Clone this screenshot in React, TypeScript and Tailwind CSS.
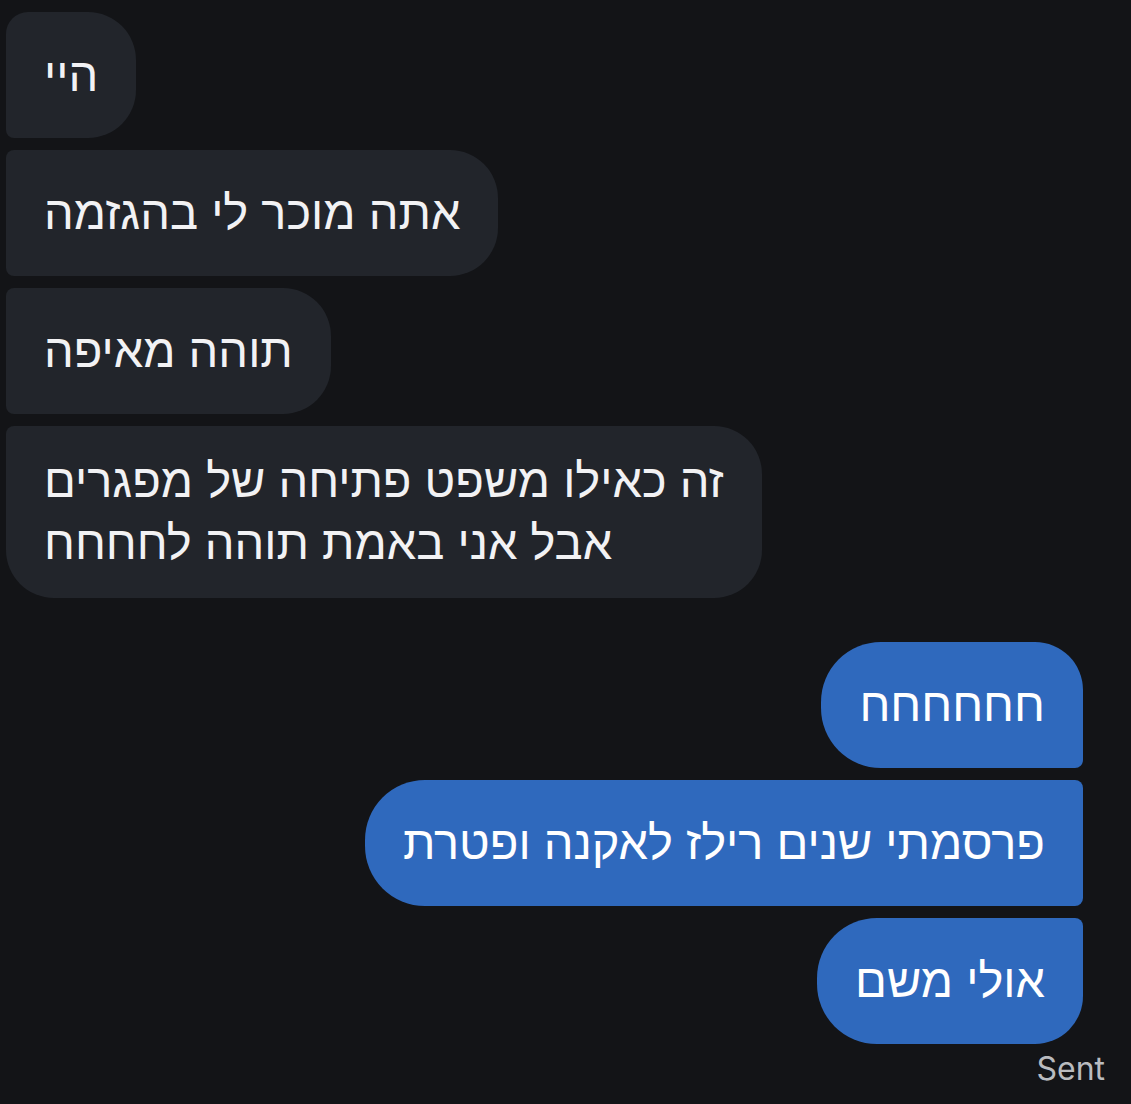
import React from "react";

const heb = { fontFamily: '"Liberation Sans", "DejaVu Sans", sans-serif' };

export default function App() {
  return (
    <div className="min-h-[1104px] w-[1131px] bg-[#131417] pt-[12px] pl-[6px] pr-[48px] flex flex-col">
      <div className="flex flex-col items-start gap-[12px]" dir="rtl" style={heb}>
        <div className="self-end h-[126px] flex items-center px-[38px] bg-[#22252b] text-[#f2f2f4] text-[47px] leading-[62px] whitespace-nowrap rounded-tl-[22px] rounded-bl-[8px] rounded-tr-[48px] rounded-br-[48px]">
          היי
        </div>
        <div className="self-end h-[126px] flex items-center px-[38px] bg-[#22252b] text-[#f2f2f4] text-[47px] leading-[62px] whitespace-nowrap rounded-tl-[8px] rounded-bl-[8px] rounded-tr-[48px] rounded-br-[48px]">
          אתה מוכר לי בהגזמה
        </div>
        <div className="self-end h-[126px] flex items-center px-[38px] bg-[#22252b] text-[#f2f2f4] text-[47px] leading-[62px] whitespace-nowrap rounded-tl-[8px] rounded-bl-[8px] rounded-tr-[48px] rounded-br-[48px]">
          תוהה מאיפה
        </div>
        <div className="self-end py-[24px] px-[38px] bg-[#22252b] text-[#f2f2f4] text-[47px] leading-[62px] whitespace-nowrap text-left rounded-tl-[8px] rounded-bl-[48px] rounded-tr-[48px] rounded-br-[48px]">
          זה כאילו משפט פתיחה של מפגרים
          <br />
          אבל אני באמת תוהה לחחחח
        </div>
      </div>
      <div className="mt-[44px] flex flex-col items-end gap-[12px]" dir="rtl" style={heb}>
        <div className="self-start h-[126px] flex items-center px-[38px] bg-[#2f69bd] text-white text-[47px] leading-[62px] whitespace-nowrap rounded-tr-[48px] rounded-br-[8px] rounded-tl-[60px] rounded-bl-[60px]">
          חחחחחח
        </div>
        <div className="self-start h-[126px] flex items-center px-[38px] bg-[#2f69bd] text-white text-[47px] leading-[62px] whitespace-nowrap rounded-tr-[8px] rounded-br-[8px] rounded-tl-[60px] rounded-bl-[60px]">
          פרסמתי שנים רילז לאקנה ופטרת
        </div>
        <div className="self-start h-[126px] flex items-center px-[38px] bg-[#2f69bd] text-white text-[47px] leading-[62px] whitespace-nowrap rounded-tr-[8px] rounded-br-[48px] rounded-tl-[60px] rounded-bl-[60px]">
          אולי משם
        </div>
      </div>
      <div className="flex justify-end mr-[-22px] mt-[3px]">
        <span className="text-[#b9bbbf] text-[32px] leading-[44px]" style={{ fontFamily: "Inter, sans-serif" }}>
          Sent
        </span>
      </div>
    </div>
  );
}
